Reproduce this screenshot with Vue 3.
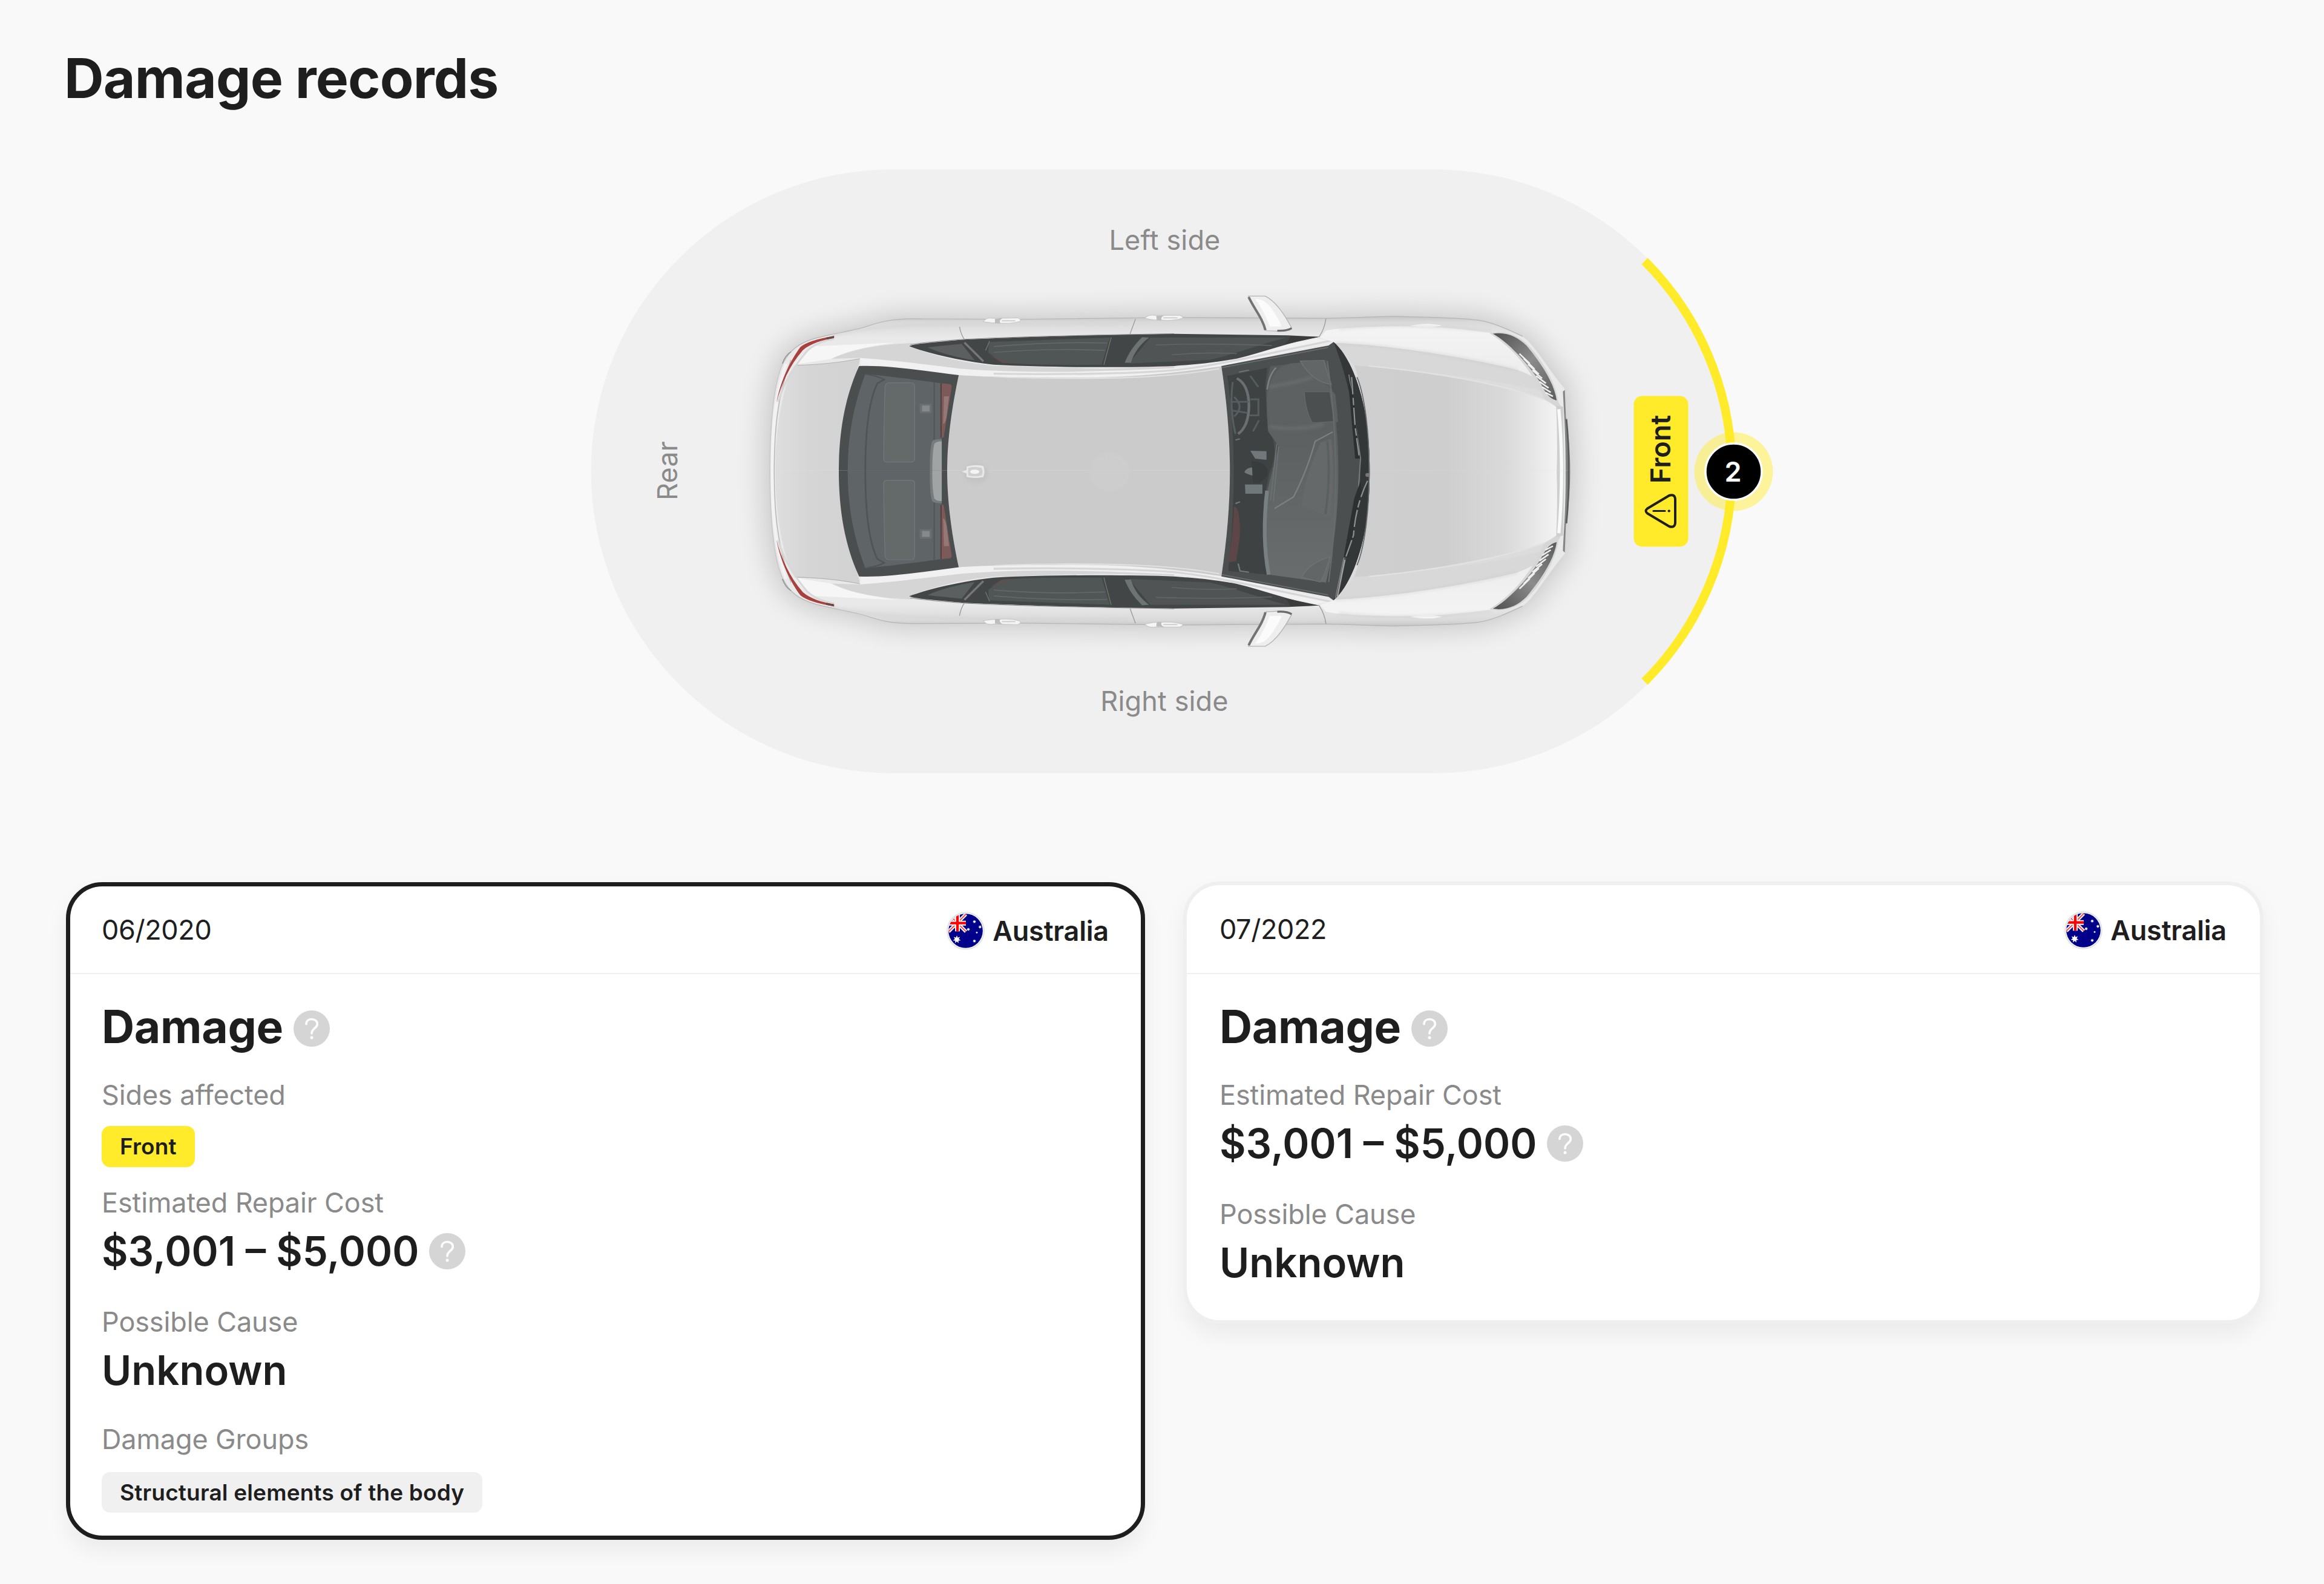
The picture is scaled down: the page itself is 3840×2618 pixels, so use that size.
<template>
    <div class="page">
        <h1 class="title">Damage records</h1>

        <svg class="diagram" viewBox="108 260 3632 1040">
            <defs>
                <linearGradient id="hood" x1="0" x2="1">
                    <stop offset="0" stop-color="#cfcfcf" />
                    <stop offset=".45" stop-color="#cecece" />
                    <stop offset=".75" stop-color="#dadada" />
                    <stop offset="1" stop-color="#f4f4f4" />
                </linearGradient>
                <linearGradient id="trunk" x1="0" x2="1">
                    <stop offset="0" stop-color="#dedede" />
                    <stop offset=".4" stop-color="#d5d5d5" />
                    <stop offset="1" stop-color="#d2d2d2" />
                </linearGradient>
                <linearGradient id="flank" gradientUnits="userSpaceOnUse" x1="0" y1="155" x2="0" y2="240">
                    <stop offset="0" stop-color="#c6c6c6" />
                    <stop offset=".25" stop-color="#d9d9d9" />
                    <stop offset="1" stop-color="#e9e9e9" />
                </linearGradient>
                <linearGradient id="fender" x1="0" y1="0" x2="0" y2="1">
                    <stop offset="0" stop-color="#f4f4f4" />
                    <stop offset=".5" stop-color="#e9e9e9" />
                    <stop offset="1" stop-color="#dedede" />
                </linearGradient>
                <linearGradient id="lamp" x1="0" y1="0" x2="1" y2="1">
                    <stop offset="0" stop-color="#4f5050" />
                    <stop offset=".5" stop-color="#8c8c8c" />
                    <stop offset="1" stop-color="#5b5c5c" />
                </linearGradient>
                <linearGradient id="dash" x1="0" y1="0" x2="0" y2="1">
                    <stop offset="0" stop-color="#565a5b" />
                    <stop offset="1" stop-color="#6a6d6e" />
                </linearGradient>
                <filter id="soft" x="-20%" y="-40%" width="140%" height="180%">
                    <feGaussianBlur stdDeviation="52" />
                </filter>
                <filter id="blur" x="-20%" y="-20%" width="140%" height="140%">
                    <feGaussianBlur stdDeviation="6" />
                </filter>

                <path id="shell" d="M72 785C72 600 85 430 120 345C145 290 180 262 240 243C300 225 380 212 430 195C480 176 520 165 600 164L1000 166L1568 158L2128 162C2250 160 2330 153 2390 154C2500 158 2620 158 2698 170C2750 180 2800 205 2858 235C2900 265 2960 380 3013 445L3018 560C3028 630 3034 700 3034 785Z" />

                <!-- one side of the car, mirrored for the other -->
                <g id="half">
                    <use href="#shell" fill="url(#flank)" />
                    <path d="M120 345C145 290 180 262 240 243C300 225 380 212 430 195C480 176 520 165 600 164L1000 166L1568 158L2128 162C2250 160 2330 153 2390 154C2500 158 2620 158 2698 170C2750 180 2800 205 2858 235" fill="none" stroke="#b5b5b5" stroke-width="3" />
                    <path d="M72 785C72 600 85 430 120 345" fill="none" stroke="#c6c6c6" stroke-width="3" />
                    <path d="M88 785C88 640 96 480 150 330" fill="none" stroke="#b4b4b4" stroke-width="3" />
                    <path d="M80 785C80 640 88 480 132 345" fill="none" stroke="#f3f3f3" stroke-width="10" />
                    <path d="M118 345Q128 312 150 297" fill="none" stroke="#8f8f8f" stroke-width="3" />
                    <path d="M300 232C400 205 520 190 720 186L1400 180" fill="none" stroke="#d0d0d0" stroke-width="5" filter="url(#blur)" />
                    <path d="M165 352C110 450 92 650 92 785H332C332 640 355 500 402 345L405 325Q300 348 165 352Z" fill="url(#trunk)" />
                    <path d="M165 352Q300 348 405 325" fill="none" stroke="#b3b3b3" stroke-width="2.5" />
                    <path d="M162 350C180 320 205 290 240 275L540 260C430 278 360 292 300 326Z" fill="#f6f6f6" />
                    <path d="M300 326C380 285 480 266 600 262L588 276C690 318 800 345 900 354L1300 366L1568 358V380H900L640 360L405 322Z" fill="#d5d5d5" />
                    <path d="M308 234C245 245 205 260 185 278C150 330 112 410 96 505C114 430 143 355 194 291C222 264 266 250 310 242Z" fill="#a8403d" />
                    <path d="M310 246C270 252 235 268 210 294C165 350 125 420 102 500" fill="none" stroke="#d8d8d8" stroke-width="7" />
                    <path d="M280 240L310 233L309 242L282 248Z" fill="#6e4644" />
                    <path d="M405 323C520 330 650 350 780 366C980 382 1200 384 1568 364C1750 345 1900 285 2095 243L2158 256L1745 356C1600 380 1400 402 1150 401C1000 400 900 400 771 392L410 354Z" fill="#f1f1f1" />
                    <path d="M900 386C1100 390 1400 388 1568 372C1720 355 1900 308 2150 252" fill="none" stroke="#d7d7d7" stroke-width="8" />

                    <!-- side glass -->
                    <path d="M588 275C600 266 650 262 790 248C1000 238 1200 230 1568 225L1990 231L2105 237C2000 255 1900 300 1800 325C1700 345 1650 348 1568 355C1400 362 1100 362 900 350C780 335 660 305 588 275Z" fill="#434646" />
                    <path d="M655 279L782 265L830 332C770 322 700 302 655 279Z" fill="#5b5f60" />
                    <path d="M882 258L1330 240L1300 350C1150 352 1020 350 930 342L880 300Z" fill="#505556" />
                    <path d="M900 276Q1120 256 1320 262M900 300Q1100 282 1312 292" fill="none" stroke="#626869" stroke-width="4" />
                    <path d="M885 312L930 342L980 345Z" fill="#694c4c" opacity=".6" />
                    <path d="M1480 240H1985C1900 262 1800 305 1700 330L1400 345Z" fill="#505455" />
                    <path d="M1450 238C1420 270 1400 300 1385 342H1408C1420 300 1440 270 1475 240Z" fill="#6d7273" />
                    <path d="M1500 270Q1700 262 1930 272M1560 310Q1680 298 1800 305" fill="none" stroke="#606566" stroke-width="4" />
                    <path d="M885 254L870 292M1335 240L1308 350" fill="none" stroke="#757770" stroke-width="3" />
                    <path d="M792 260L862 336" stroke="#777" stroke-width="8" />
                    <path d="M1998 234Q1994 254 1975 268L2105 237Z" fill="#3a3c3c" />
                    <path d="M592 268C640 260 720 252 800 246C1000 236 1200 230 1568 224" fill="none" stroke="#8b8b8b" stroke-width="2.5" />

                    <!-- panel gaps -->
                    <path d="M774 196Q778 225 792 248M1425 165L1405 225M2130 163Q2125 205 2104 238" fill="none" stroke="#9a9a9a" stroke-width="3" />
                    <!-- handles -->
                    <path d="M862 176Q872 156 900 162L990 160Q1004 168 998 174Q970 184 930 182L890 180Z" fill="#f5f5f5" stroke="#c9c9c9" stroke-width="3" />
                    <path d="M905 164L935 160Q918 170 925 182H905Z" fill="#bdbdbd" />
                    <path d="M930 172H980" stroke="#d0d0d0" stroke-width="5" />
                    <path d="M1460 162Q1470 146 1498 150L1590 150Q1604 156 1598 162Q1570 172 1530 170L1490 168Z" fill="#f5f5f5" stroke="#c9c9c9" stroke-width="3" />
                    <path d="M1502 152L1532 150Q1516 158 1522 170H1504Z" fill="#bdbdbd" />
                    <path d="M1528 160H1580" stroke="#d0d0d0" stroke-width="5" />

                    <path d="M771 392C900 402 1000 400 1150 402C1350 405 1500 395 1743 356C1760 480 1776 640 1776 785H726C726 640 750 500 771 392Z" fill="#cbcbcb" />
                    <path d="M900 398C1000 404 1300 412 1500 396Q1620 388 1735 366" fill="none" stroke="#e3e3e3" stroke-width="4" />

                    <!-- rear window -->
                    <path d="M402 355C500 350 650 375 771 392C750 500 728 640 728 785H327C327 620 350 480 402 355Z" fill="#4b4e4e" />
                    <path d="M425 388C500 395 620 412 708 425V785H360C360 640 380 520 425 388Z" fill="#5f6466" />
                    <path d="M425 388Q470 395 495 410L470 425C435 500 425 650 425 785" fill="none" stroke="#505456" stroke-width="6" />
                    <path d="M512 423H595Q608 423 608 440V730Q608 744 595 744H505Q493 744 493 730Q494 580 498 440Q500 423 512 423Z" fill="#646a6a" stroke="#747a7a" stroke-width="2.5" />
                    <rect x="626" y="508" width="44" height="38" fill="#6b6f71" />
                    <rect x="635" y="515" width="28" height="24" fill="#85898a" />
                    <path d="M680 422V785" stroke="#525658" stroke-width="5" />
                    <path d="M703 425H708V645H703Z" fill="#5a3e40" />
                    <path d="M708 425L738 428Q747 432 744 445L715 645H708Z" fill="#7d5a5a" />
                    <path d="M716 478H735L726 560Q720 590 713 590Z" fill="#967777" />
                    <path d="M664 785C664 730 664 690 672 662Q676 650 708 652V785Z" fill="#777c7d" />
                    <path d="M673 785C673 740 674 700 680 672Q684 660 708 660V785Z" fill="#a0a4a5" />

                    <!-- hood -->
                    <path d="M2108 240L2130 212C2200 195 2400 192 2500 196C2600 200 2700 215 2748 222C2820 275 2870 350 2925 420L2985 515C2990 600 2990 700 2990 785H2293C2293 600 2250 350 2158 258Z" fill="url(#fender)" />
                    <path d="M2162 262C2350 268 2650 320 2840 372L2925 420L2985 515C2992 600 2992 700 2992 785H2293C2293 600 2250 350 2162 262Z" fill="#dcdcdc" />
                    <path d="M2162 262C2350 268 2650 320 2840 372C2900 395 2930 420 2940 460C2760 405 2400 365 2235 352Z" fill="#d8d8d8" />
                    <path d="M2162 262C2350 268 2650 320 2840 372" fill="none" stroke="#c6c6c6" stroke-width="4" filter="url(#blur)" />
                    <path d="M2235 352C2500 376 2780 425 2958 500L2985 520C2992 600 2992 700 2992 785H2293C2293 640 2275 480 2235 352Z" fill="url(#hood)" />
                    <path d="M2290 355C2500 376 2780 425 2958 498" fill="none" stroke="#e2e2e2" stroke-width="5" />
                    <path d="M2440 192Q2510 178 2560 192Q2510 204 2440 192Z" fill="#fbfbfb" />
                    <path d="M2180 205C2300 188 2500 186 2740 214" fill="none" stroke="#cfcfcf" stroke-width="5" filter="url(#blur)" />
                    <!-- headlamp -->
                    <path d="M2735 222L2760 218C2800 215 2850 235 2880 272C2930 330 2985 430 2990 500L3010 540L2975 515L2940 490C2890 370 2820 280 2735 222Z" fill="#d6d6d6" />
                    <path d="M2748 224C2800 215 2840 238 2872 272C2920 335 2975 420 2984 494C2960 488 2945 470 2925 425C2880 350 2810 262 2748 224Z" fill="url(#lamp)" />
                    <path d="M2846 305L2884 345M2862 325L2902 368M2878 348L2918 388M2894 372L2930 405M2908 395L2944 425M2920 418L2954 444M2930 440L2962 462M2942 462L2970 478" stroke="#f0f0f0" stroke-width="6" />
                    <!-- nose -->
                    <path d="M2982 515L3008 520L3012 785H2984Q2988 640 2982 515Z" fill="#cfcfcf" />
                    <path d="M2992 530Q3002 650 3002 785" fill="none" stroke="#fafafa" stroke-width="12" />
                    <path d="M3007 458L3014 452L3018 560C3030 650 3034 710 3034 785H3017C3018 650 3012 560 3007 458Z" fill="#838484" />
                    <path d="M3020 570Q3030 680 3028 785" fill="none" stroke="#5b5c5c" stroke-width="6" />
                </g>

                <g id="mirror">
                    <path d="M1843 72L1905 72C1950 95 1985 165 2003 200Q1995 216 1960 214L1908 212C1895 165 1860 110 1843 72Z" fill="#eeeeee" stroke="#b4b4b4" stroke-width="3" />
                    <path d="M1868 84C1900 80 1925 110 1945 150Q1965 185 1965 195H1922Q1900 130 1868 84Z" fill="#fbfbfb" />
                    <path d="M1844 76C1865 125 1895 160 1906 210" fill="none" stroke="#737373" stroke-width="9" />
                    <path d="M1950 212Q1985 214 2003 202" fill="none" stroke="#6b6b6b" stroke-width="8" />
                </g>
            </defs>

            <rect x="976.5" y="280" width="1891" height="998" rx="499" fill="#f0f0f0" />

            <g transform="translate(1240 460) scale(.44643 .40816)">
                <g filter="url(#soft)" opacity=".17">
                    <use href="#shell" stroke="#000" stroke-width="40" />
                    <use href="#shell" stroke="#000" stroke-width="40" transform="translate(0 1562) scale(1 -1)" />
                </g>
                <use href="#half" />
                <use href="#half" transform="translate(0 1562) scale(1 -1)" />

                <!-- roof aerial -->
                <ellipse cx="835" cy="790" rx="45" ry="42" fill="#bdbdbd" opacity=".5" filter="url(#blur)" />
                <path d="M782 783L800 776V762Q832 752 862 760Q870 783 862 805Q832 812 800 804V790Z" fill="#e9e9e9" />
                <path d="M806 768Q830 760 856 768Q862 783 856 798Q830 806 806 798Z" fill="#d0d0d0" />
                <ellipse cx="830" cy="783" rx="17" ry="9" fill="#f4f4f4" />
                <circle cx="1330" cy="785" r="75" fill="#cfcfcf" opacity=".7" filter="url(#blur)" />

                <!-- windshield -->
                <path d="M1743 355L2140 272L2158 258C2215 310 2262 440 2280 580C2296 700 2296 862 2280 982C2262 1122 2215 1252 2158 1304L2140 1290L1743 1207C1785 900 1785 662 1743 355Z" fill="#4b4f4f" />
                <path d="M1765 395L1913 362L1905 440L1918 600Q1960 700 1920 790L1900 900Q1895 1060 1920 1200L1768 1185C1796 900 1796 640 1765 395Z" fill="#3e4242" />
                <path d="M1925 356L2130 330C2160 460 2176 620 2176 781C2176 942 2160 1100 2130 1232L1920 1200C1895 1060 1900 900 1920 830L1955 680L1916 620C1908 520 1905 430 1925 356Z" fill="url(#dash)" />
                <path d="M1916 460Q1930 360 2000 345L2050 340Q2075 400 2130 430L2165 470L2175 580L2090 620Q2000 640 1965 670Q1905 600 1916 460Z" fill="#5d6162" />
                <path d="M1920 440Q2030 420 2080 400M1920 600Q2030 620 2120 590" fill="none" stroke="#6e7374" stroke-width="8" filter="url(#blur)" />
                <path d="M2035 335L2122 332Q2140 400 2150 430Q2080 420 2035 335ZM2040 1210Q2070 1150 2145 1128Q2125 1200 2110 1230Z" fill="#626667" stroke="#6f7475" stroke-width="3" />
                <path d="M2050 460H2145L2160 580L2080 585Q2055 540 2050 460Z" fill="#4b4f50" stroke="#636869" stroke-width="3" />
                <path d="M2155 622L2090 660Q2060 780 2010 885L1940 932" fill="none" stroke="#7c8181" stroke-width="5" />
                <path d="M2110 665L2150 650Q2165 810 2145 965L2040 925Q2050 800 2110 665Z" fill="#66696a" />
                <path d="M2135 658Q2148 810 2128 955" fill="none" stroke="#5a5f5f" stroke-width="8" />
                <path d="M2135 335Q2195 781 2140 1230" fill="none" stroke="#666b6b" stroke-width="5" />
                <path d="M1948 670L1925 900M1955 680L1935 905" stroke="#6b7273" stroke-width="4" />
                <path d="M1912 860Q1892 1050 1918 1200" fill="none" stroke="#788081" stroke-width="14" />
                <path d="M1912 450Q1920 390 1945 362" fill="none" stroke="#7e8485" stroke-width="5" />
                <!-- steering wheel -->
                <path d="M1800 405Q1845 430 1845 520Q1843 600 1805 630" fill="none" stroke="#6a7071" stroke-width="10" />
                <path d="M1785 420Q1772 520 1795 630M1780 500H1845M1780 535L1840 545M1790 480Q1830 520 1790 560" fill="none" stroke="#565e60" stroke-width="7" />
                <path d="M1850 490H1880V555H1848M1860 620L1882 575M1850 395L1880 440" fill="none" stroke="#555c5d" stroke-width="7" />
                <path d="M1808 380L1845 372M1795 655L1812 650" stroke="#6b7273" stroke-width="5" />
                <path d="M1828 785Q1835 765 1865 765V800Q1840 795 1828 785ZM1830 835H1895V872H1832ZM1850 698L1910 700V735L1868 730Z" fill="#707879" />
                <path d="M1855 740Q1915 745 1915 785Q1910 825 1860 830Z" fill="#393c3d" />
                <path d="M1790 925Q1812 920 1812 1040L1798 1145L1768 1150Q1785 1040 1790 925Z" fill="#5c4647" />
                <path d="M1795 912L1812 905M1805 1155L1812 1185L1845 1190" fill="none" stroke="#757b7c" stroke-width="5" />
                <path d="M1745 362L2138 280M1745 1200L2138 1282" stroke="#6c7070" stroke-width="4" />
                <!-- cowl and wipers -->
                <path d="M2158 258C2215 310 2262 440 2280 580C2296 700 2296 862 2280 982C2262 1122 2215 1252 2158 1304C2210 1150 2232 1000 2258 850L2256 730C2240 560 2210 400 2158 258Z" fill="#343737" />
                <path d="M2215 390L2258 730L2250 855L2165 1295" fill="none" stroke="#7b7f7f" stroke-width="4" />
                <path d="M2210 390L2238 730H2256L2232 480ZM2258 820L2235 890L2195 1130H2212L2262 860Z" fill="#2d3030" />
                <path d="M2225 400L2238 600L2254 730M2284 820Q2240 920 2232 1040L2200 1140" fill="none" stroke="#8e9191" stroke-width="5" stroke-dasharray="70 14 30 10" />
                <path d="M2200 1140L2172 1290" stroke="#a1a3a3" stroke-width="5" />
                <path d="M2245 400C2305 560 2305 1002 2245 1162" fill="none" stroke="#666a6a" stroke-width="4" />
                <circle cx="2284" cy="796" r="8" fill="#777" />

                <use href="#mirror" />
                <use href="#mirror" transform="translate(0 1562) scale(1 -1)" />
            </g>

            <text class="side" x="1924.5" y="412.7">Left side</text>
            <text class="side" x="1924" y="1174.7">Right side</text>
            <text class="side" transform="translate(1119.3 778) rotate(-90)">Rear</text>

            <!-- 45 degrees each way from the nose -->
            <path d="M2717.5 431.5A491.5 491.5 0 0 1 2717.5 1126.5" fill="none" stroke="#ffeb29" stroke-width="14.5" />

            <rect x="2699.5" y="654.5" width="90" height="249" rx="14" fill="#ffeb29" />
            <text class="side-on" transform="translate(2760.3 799) rotate(-90)">Front</text>
            <g fill="none" stroke="#1e1e1e" stroke-width="4" stroke-linecap="round" stroke-linejoin="round">
                <path d="M2722 840.500L2758 819Q2767.500 816 2768 825V864Q2767.500 873 2758 870L2722 848.500Q2717 844.500 2722 840.500Z" />
                <path d="M2732 844.500H2751" stroke-width="3.200" />
                <path d="M2757.500 844.500H2758" />
            </g>

            <circle cx="2864.500" cy="779.500" r="65" fill="#ffeb29" fill-opacity=".45" />
            <circle cx="2864.500" cy="779.500" r="46.500" fill="#000" stroke="#fff" stroke-width="3.500" />
            <text class="count" x="2863.500" y="796">{{ frontCount }}</text>
        </svg>

        <div class="cards">
            <div v-for="record in records" :key="record.date" class="card" :class="{ selected: record.selected }">
                <div class="card-head">
                    <span class="date">{{ record.date }}</span>
                    <span class="country">
                        <svg class="flag" viewBox="0 0 189 189">
                            <clipPath id="disc"><circle cx="94.500" cy="94.500" r="85" /></clipPath>
                            <circle cx="94.500" cy="94.500" r="91" fill="#fff" stroke="#e2e2e2" stroke-width="6" />
                            <g clip-path="url(#disc)">
                                <rect width="189" height="189" fill="#00008b" />
                                <path d="M10 12L96 98M96 12L10 98" stroke="#fff" stroke-width="17" />
                                <path d="M10 12L96 98M96 12L10 98" stroke="#ff4a4a" stroke-width="6" />
                                <path d="M54 5V97M5 56H96" stroke="#fff" stroke-width="24" />
                                <path d="M54 5V97M5 56H96" stroke="#f00" stroke-width="13" />
                                <path v-for="s in stars" :key="s.x + '-' + s.y" :d="star(s)" fill="#fff" />
                            </g>
                        </svg>
                        {{ record.country }}
                    </span>
                </div>
                <div class="card-body">
                    <h2 class="heading">
                        Damage
                        <svg class="help" viewBox="0 0 60 60">
                            <circle cx="30" cy="30" r="30" />
                            <path d="M21 22.500C21 17.500 24.800 14.500 30 14.500S39.300 17.800 39.300 22.500C39.300 29.500 30 29.500 30 38" />
                            <path d="M30 45V45.100" class="dot" />
                        </svg>
                    </h2>
                    <div v-for="field in record.fields" :key="field.label" class="field">
                        <div class="label">{{ field.label }}</div>
                        <div v-if="field.chip" class="chip" :class="field.chip">{{ field.value }}</div>
                        <div v-else class="value" :class="{ hinted: field.help }">
                            {{ field.value }}
                            <svg v-if="field.help" class="help" viewBox="0 0 60 60">
                                <circle cx="30" cy="30" r="30" />
                                <path d="M21 22.500C21 17.500 24.800 14.500 30 14.500S39.300 17.800 39.300 22.500C39.300 29.500 30 29.500 30 38" />
                                <path d="M30 45V45.100" class="dot" />
                            </svg>
                        </div>
                    </div>
                </div>
            </div>
        </div>
    </div>
</template>

<script setup>
import { ref } from 'vue'

const frontCount = ref(2)

const records = ref([
    {
        date: '06/2020',
        country: 'Australia',
        selected: true,
        fields: [
            { label: 'Sides affected', value: 'Front', chip: 'yellow' },
            { label: 'Estimated Repair Cost', value: '$3,001 – $5,000', help: true },
            { label: 'Possible Cause', value: 'Unknown' },
            { label: 'Damage Groups', value: 'Structural elements of the body', chip: 'gray' },
        ],
    },
    {
        date: '07/2022',
        country: 'Australia',
        selected: false,
        fields: [
            { label: 'Estimated Repair Cost', value: '$3,001 – $5,000', help: true },
            { label: 'Possible Cause', value: 'Unknown' },
        ],
    },
])

// flag stars
const stars = [
    { x: 51, y: 137, r: 20 },
    { x: 138, y: 49, r: 9 },
    { x: 166, y: 75, r: 9 },
    { x: 108, y: 87, r: 9 },
    { x: 150, y: 103, r: 6 },
    { x: 138, y: 145, r: 9 },
]

const star = ({ x, y, r }) => {
    let d = ''
    for (let i = 0; i < 14; i++) {
        const len = i % 2 ? r * 0.5 : r
        const a = (i * Math.PI) / 7 - Math.PI / 2
        d += `${i ? 'L' : 'M'}${(x + len * Math.cos(a)).toFixed(1)} ${(y + len * Math.sin(a)).toFixed(1)}`
    }
    return d + 'Z'
}
</script>

<style>
body {
    margin: 0;
    background: #f9f9f9;
}
</style>

<style scoped>
.page {
    box-sizing: border-box;
    width: 3840px;
    min-height: 2618px;
    padding: 74px 100px 0 108px;
    background: #f9f9f9;
    color: #1e1e1e;
    font-family: Inter, "Liberation Sans", sans-serif;
    font-size: 45px;
}

.title {
    margin: 0 0 0 -2px;
    font-size: 91px;
    font-weight: 700;
    line-height: 110px;
    letter-spacing: -0.85px;
}

.diagram {
    display: block;
    width: 3632px;
    height: 1040px;
    margin: 76px 0 157px;
}

.side {
    fill: #8a8a8a;
    font-size: 45px;
    letter-spacing: 0.15px;
    text-anchor: middle;
}

.side-on {
    fill: #1e1e1e;
    font-size: 45px;
    font-weight: 600;
}

.count {
    fill: #fff;
    font-size: 45px;
    font-weight: 600;
    text-anchor: middle;
}

.cards {
    display: grid;
    grid-template-columns: 1fr 1fr;
    gap: 62px;
    align-items: start;
}

.card {
    --inset: 0px;
    border: 6px solid #efefef;
    border-radius: 60px;
    background: #fff;
    box-shadow: 0 18px 36px rgba(0, 0, 0, 0.06);
}

.card.selected {
    --inset: 2px;
    margin: 1px;
    border: 7px solid #1e1e1e;
}

.card-head {
    display: flex;
    justify-content: space-between;
    align-items: center;
    box-sizing: border-box;
    height: calc(147px - var(--inset));
    padding: 0 calc(55px - var(--inset)) 0 calc(54px - var(--inset));
    border-bottom: 2px solid #f0f0f0;
}

.date {
    letter-spacing: -0.4px;
}

.country {
    display: flex;
    align-items: center;
    gap: 13px;
    padding-top: 3px;
    font-weight: 600;
    letter-spacing: -0.2px;
}

.flag {
    width: 63px;
    height: 63px;
}

.card-body {
    padding: 42px calc(54px - var(--inset)) 50px;
}

.selected .card-body {
    padding-bottom: 38px;
}

.heading {
    display: flex;
    align-items: center;
    gap: 17px;
    margin: 0 0 34px;
    font-size: 75px;
    font-weight: 700;
    line-height: 90px;
    letter-spacing: -0.3px;
}

.help {
    width: 60px;
    height: 60px;
    margin-top: 6px;
    fill: none;
    stroke: #fff;
    stroke-width: 3.6;
    stroke-linecap: round;
}

.help circle {
    fill: #d5d5d5;
    stroke: none;
}

.help .dot {
    stroke-width: 5;
}

.label {
    color: #8a8a8a;
    line-height: 68px;
    letter-spacing: -0.12px;
}

.value {
    display: flex;
    align-items: center;
    gap: 17px;
    margin: 1px 0 35px;
    font-size: 67px;
    font-weight: 600;
    line-height: 90px;
}

.value .help {
    margin-top: 0;
}

.value.hinted {
    margin-bottom: 38px;
}

.field:last-child .value {
    margin-bottom: 0;
}

.chip {
    width: fit-content;
    padding: 0 30px;
    border-radius: 14px;
    font-size: 37px;
    font-weight: 600;
    line-height: 68px;
    letter-spacing: 0.17px;
}

.yellow {
    margin: 17px 0 25px;
    background: #ffeb29;
}

.gray {
    margin-top: 20px;
    background: #f0f0f0;
    line-height: 67px;
}
</style>
